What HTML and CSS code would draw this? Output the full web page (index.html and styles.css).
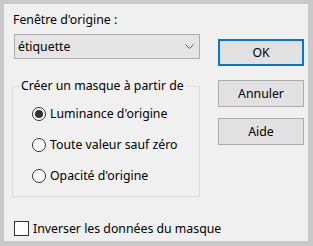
FILE: index.html
```html
<!DOCTYPE html>
<html lang="fr">
<head>
    <meta charset="UTF-8">
    <title>Masque</title>
    <link rel="stylesheet" href="styles.css">
</head>
<body>
    <div class="dialog">
        <div class="main">
            <div class="titre">Fenêtre d'origine :</div>
            <div class="combo">
                <span>étiquette</span>
                <svg width="9" height="5" viewBox="0 0 9 5"><path d="M0.5 0.5 L4.5 4.5 L8.5 0.5" fill="none" stroke="#555" stroke-width="1"/></svg>
            </div>
            <fieldset class="groupe">
                <legend>Créer un masque à partir de</legend>
                <label class="option"><span class="radio coche"></span>Luminance d'origine</label>
                <label class="option"><span class="radio"></span>Toute valeur sauf zéro</label>
                <label class="option"><span class="radio"></span>Opacité d'origine</label>
            </fieldset>
        </div>
        <div class="boutons">
            <div class="bouton defaut">OK</div>
            <div class="bouton annuler">Annuler</div>
            <div class="bouton">Aide</div>
        </div>
        <label class="case"><span class="boite"></span>Inverser les données du masque</label>
    </div>
</body>
</html>
```

FILE: styles.css
```css
html, body {
    margin: 0;
    background: #c9c9c9;
    font-family: "Noto Sans", sans-serif;
    font-size: 12.3px;
    color: #000;
}
.dialog {
    box-sizing: border-box;
    width: 304px;
    height: 237px;
    margin: 4px 5px 5px 4px;
    background: #f0f0f0;
    padding: 8px 4px 0 8px;
    display: grid;
    grid-template-columns: 188px 86px;
    column-gap: 18px;
    align-items: start;
}
.titre {
    line-height: 16px;
    height: 16px;
    margin-left: 1px;
}
.combo {
    box-sizing: border-box;
    margin: 6px 0 0 2px;
    width: 186px;
    height: 25px;
    border: 1px solid #adadad;
    background: #e5e5e5;
    display: flex;
    align-items: center;
    justify-content: space-between;
    padding: 0 5px 0 3px;
}
.combo span {
    line-height: 16px;
}
.groupe {
    box-sizing: border-box;
    margin: 19px 0 0 0;
    width: 188px;
    border: 1px solid #dcdcdc;
    padding: 4px 0 5px 19px;
}
.groupe legend {
    margin-left: -13px;
    padding: 0 2px;
    line-height: 16px;
}
.option {
    display: flex;
    align-items: center;
    height: 31px;
    gap: 4px;
}
.radio {
    box-sizing: border-box;
    width: 14px;
    height: 14px;
    border: 1px solid #333;
    border-radius: 50%;
    background: #fff;
    display: flex;
    align-items: center;
    justify-content: center;
}
.radio.coche::after {
    content: "";
    width: 8px;
    height: 8px;
    border-radius: 50%;
    background: #333;
}
.boutons {
    margin-top: 27px;
    display: flex;
    flex-direction: column;
}
.bouton {
    box-sizing: border-box;
    height: 27px;
    border: 1px solid #adadad;
    background: #e1e1e1;
    display: flex;
    align-items: center;
    justify-content: center;
    margin-bottom: 11px;
}
.bouton.defaut {
    border: 2px solid #0078d7;
    margin-bottom: 14px;
}
.case {
    grid-column: 1 / 3;
    display: flex;
    align-items: center;
    gap: 4px;
    margin: 19px 0 0 2px;
    line-height: 16px;
    white-space: nowrap;
}
.boite {
    box-sizing: border-box;
    width: 15px;
    height: 15px;
    border: 1px solid #333;
    background: #fff;
}
```
